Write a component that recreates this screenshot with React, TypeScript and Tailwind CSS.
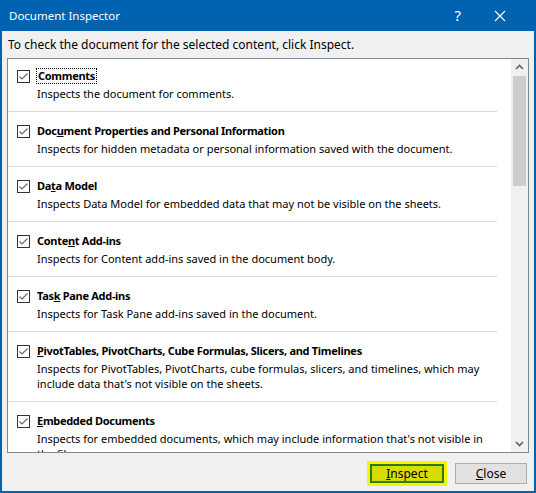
import type { ReactNode } from "react";

type Item = {
  title: ReactNode;
  desc: string[];
  focused?: boolean;
};

const ITEMS: Item[] = [
  { title: "Comments", desc: ["Inspects the document for comments."], focused: true },
  {
    title: (
      <>
        Doc<u>u</u>ment Properties and Personal Information
      </>
    ),
    desc: ["Inspects for hidden metadata or personal information saved with the document."],
  },
  {
    title: (
      <>
        Da<u>t</u>a Model
      </>
    ),
    desc: ["Inspects Data Model for embedded data that may not be visible on the sheets."],
  },
  {
    title: (
      <>
        Conte<u>n</u>t Add-ins
      </>
    ),
    desc: ["Inspects for Content add-ins saved in the document body."],
  },
  {
    title: (
      <>
        Tas<u>k</u> Pane Add-ins
      </>
    ),
    desc: ["Inspects for Task Pane add-ins saved in the document."],
  },
  {
    title: (
      <>
        <u>P</u>ivotTables, PivotCharts, Cube Formulas, Slicers, and Timelines
      </>
    ),
    desc: [
      "Inspects for PivotTables, PivotCharts, cube formulas, slicers, and timelines, which may",
      "include data that's not visible on the sheets.",
    ],
  },
  {
    title: (
      <>
        <u>E</u>mbedded Documents
      </>
    ),
    desc: [
      "Inspects for embedded documents, which may include information that's not visible in",
      "the file.",
    ],
  },
];

function CheckBox() {
  return (
    <svg width="13" height="13" viewBox="0 0 13 13" className="shrink-0">
      <rect x="0.5" y="0.5" width="12" height="12" fill="#fff" stroke="#333" />
      <path d="M2.5 6.5 L5 9 L10.5 3.5" fill="none" stroke="#666" strokeWidth="1.1" />
    </svg>
  );
}

function Row({ item, first }: { item: Item; first: boolean }) {
  return (
    <div className={first ? "pt-[9px] pb-[10px]" : "border-t border-[#dadada] pt-[11px] pb-[10px]"}>
      <div className="flex h-[16px] items-center pl-[9px]">
        <CheckBox />
        <span
          className={
            item.focused
              ? "ml-[6px] border border-dotted border-black px-[1px] text-[11px] leading-[14px] font-bold tracking-[-0.3px]"
              : "ml-[7px] text-[11px] leading-[16px] font-bold tracking-[-0.3px]"
          }
        >
          {item.title}
        </span>
      </div>
      <div className="mt-[2px] pl-[29px] text-[11px] leading-[15px]">
        {item.desc.map((line) => (
          <div key={line} className="whitespace-nowrap">
            {line}
          </div>
        ))}
      </div>
    </div>
  );
}

function Chevron({ up }: { up: boolean }) {
  return (
    <svg width="17" height="17" viewBox="0 0 17 17">
      <path
        d={up ? "M5 10 L8.5 6.5 L12 10" : "M5 7 L8.5 10.5 L12 7"}
        fill="none"
        stroke="#606060"
        strokeWidth="1.6"
      />
    </svg>
  );
}

export default function App() {
  return (
    <div
      className="flex h-[493px] w-[536px] flex-col bg-[#0063b1] text-[12px] text-black"
      style={{ fontFamily: '"Noto Sans", "Liberation Sans", sans-serif' }}
    >
      <div className="flex h-[31px] shrink-0 items-center text-white">
        <span className="pl-[9px] text-[11.5px]">Document Inspector</span>
        <span className="ml-auto mr-[33px] text-[15px] leading-none">?</span>
        <svg width="12" height="12" viewBox="0 0 12 12" className="mr-[30px]">
          <path d="M1 1 L11 11 M11 1 L1 11" stroke="#fff" strokeWidth="1.1" />
        </svg>
      </div>
      <div className="mx-[2px] mb-[2px] flex flex-1 flex-col bg-[#f0f0f0]">
        <div className="flex h-[27px] items-center pl-[6px]">
          To check the document for the selected content, click Inspect.
        </div>
        <div className="mx-[5px] flex h-[395px] border border-[#828790] bg-white">
          <div className="flex-1 overflow-hidden">
            <div className="mr-[14px]">
              {ITEMS.map((item, i) => (
                <Row key={i} item={item} first={i === 0} />
              ))}
            </div>
          </div>
          <div className="flex w-[17px] flex-col bg-[#f0f0f0]">
            <Chevron up />
            <div className="flex-1 px-[2px]">
              <div className="h-[110px] bg-[#cdcdcd]" />
            </div>
            <Chevron up={false} />
          </div>
        </div>
        <div className="flex flex-1 items-center justify-end gap-[8px] pr-[7px] pt-[3px]">
          <div className="h-[25px] w-[80px] bg-[#f5f500] p-[3px]">
            <div className="flex h-full items-center justify-center border-2 border-[#2a7a1e] bg-[#d9dc00]">
              <span>
                <u>I</u>nspect
              </span>
            </div>
          </div>
          <div className="flex h-[21px] w-[72px] items-center justify-center border border-[#adadad] bg-[#e1e1e1]">
            <span>
              <u>C</u>lose
            </span>
          </div>
        </div>
      </div>
    </div>
  );
}
